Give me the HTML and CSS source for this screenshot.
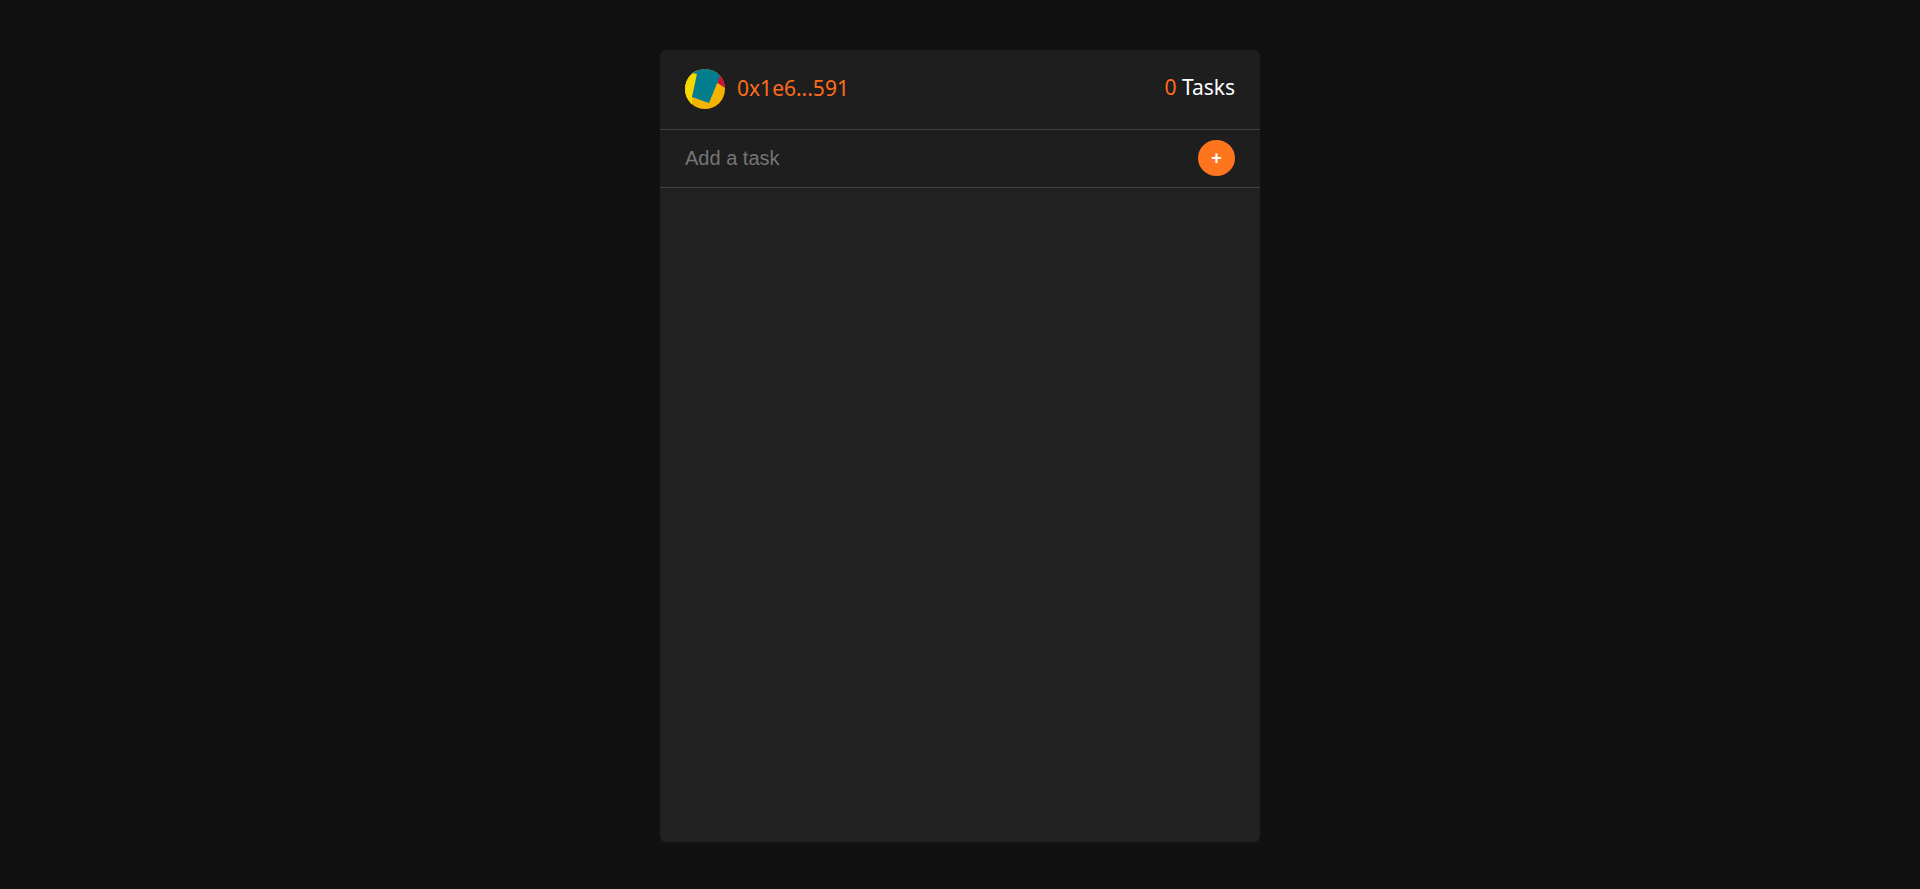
FILE: index.html
```html
<!DOCTYPE html>
<html lang="en">
<head>
<meta charset="utf-8">
<meta name="viewport" content="width=device-width, initial-scale=1">
<title>Tasks</title>
<link rel="stylesheet" href="styles.css">
</head>
<body>
<main class="card">
  <header class="header">
    <div class="account">
      <svg class="avatar" viewBox="0 0 40 40" aria-hidden="true">
        <rect width="40" height="40" fill="#f3b300"/>
        <path d="M0 0H13L7 28V40H0Z" fill="#f5d800"/>
        <path d="M34 0H40V19L31 13Z" fill="#c8143c"/>
        <path d="M7 4V0H33L35 7L24 34L7 28L12 5Z" fill="#017d8e"/>
      </svg>
      <span class="address">0x1e6...591</span>
    </div>
    <h1 class="count"><span class="number">0</span> Tasks</h1>
  </header>
  <form class="add">
    <input class="field" type="text" placeholder="Add a task" aria-label="Add a task">
    <button class="submit" type="button" aria-label="Add">+</button>
  </form>
</main>
</body>
</html>
```
FILE: styles.css
```css
* { box-sizing: border-box; }

body {
  display: flex;
  justify-content: center;
  min-height: 100vh;
  margin: 0;
  padding: 50px 0 47px;
  background: #111;
  color: #fff;
  font-family: "Noto Sans", sans-serif;
}

.card {
  width: 100%;
  max-width: 600px;
  overflow: hidden;
  border-radius: 6px;
  background: #212121;
}

.header {
  display: flex;
  align-items: flex-start;
  justify-content: space-between;
  padding: 19px 25px 20px;
  border-bottom: 1px solid #404040;
  background: #1e1e1e;
}

.account {
  display: flex;
  align-items: flex-start;
  gap: 12px;
}

.avatar {
  width: 40px;
  height: 40px;
  border-radius: 50%;
}

.address,
.count {
  margin: 0;
  font-size: 21px;
  font-weight: 400;
  line-height: 36px;
}

.address { line-height: 38px; }

.address,
.number { color: #ff6c1c; }

.add {
  display: flex;
  align-items: center;
  justify-content: space-between;
  padding: 10px 25px 11px;
  border-bottom: 1px solid #404040;
  background: #1e1e1e;
}

.field {
  flex: 1;
  min-width: 0;
  padding: 0;
  border: 0;
  outline: 0;
  background: transparent;
  color: #fff;
  font-family: "Liberation Sans", Arial, sans-serif;
  font-size: 20px;
}

.field::placeholder { color: #757575; }

.submit {
  width: 37px;
  height: 36px;
  padding: 0;
  border: 0;
  border-radius: 50%;
  background: #ff751d;
  color: #fff;
  font-family: "Liberation Sans", Arial, sans-serif;
  font-size: 18px;
  font-weight: 700;
  line-height: 36px;
}
```
